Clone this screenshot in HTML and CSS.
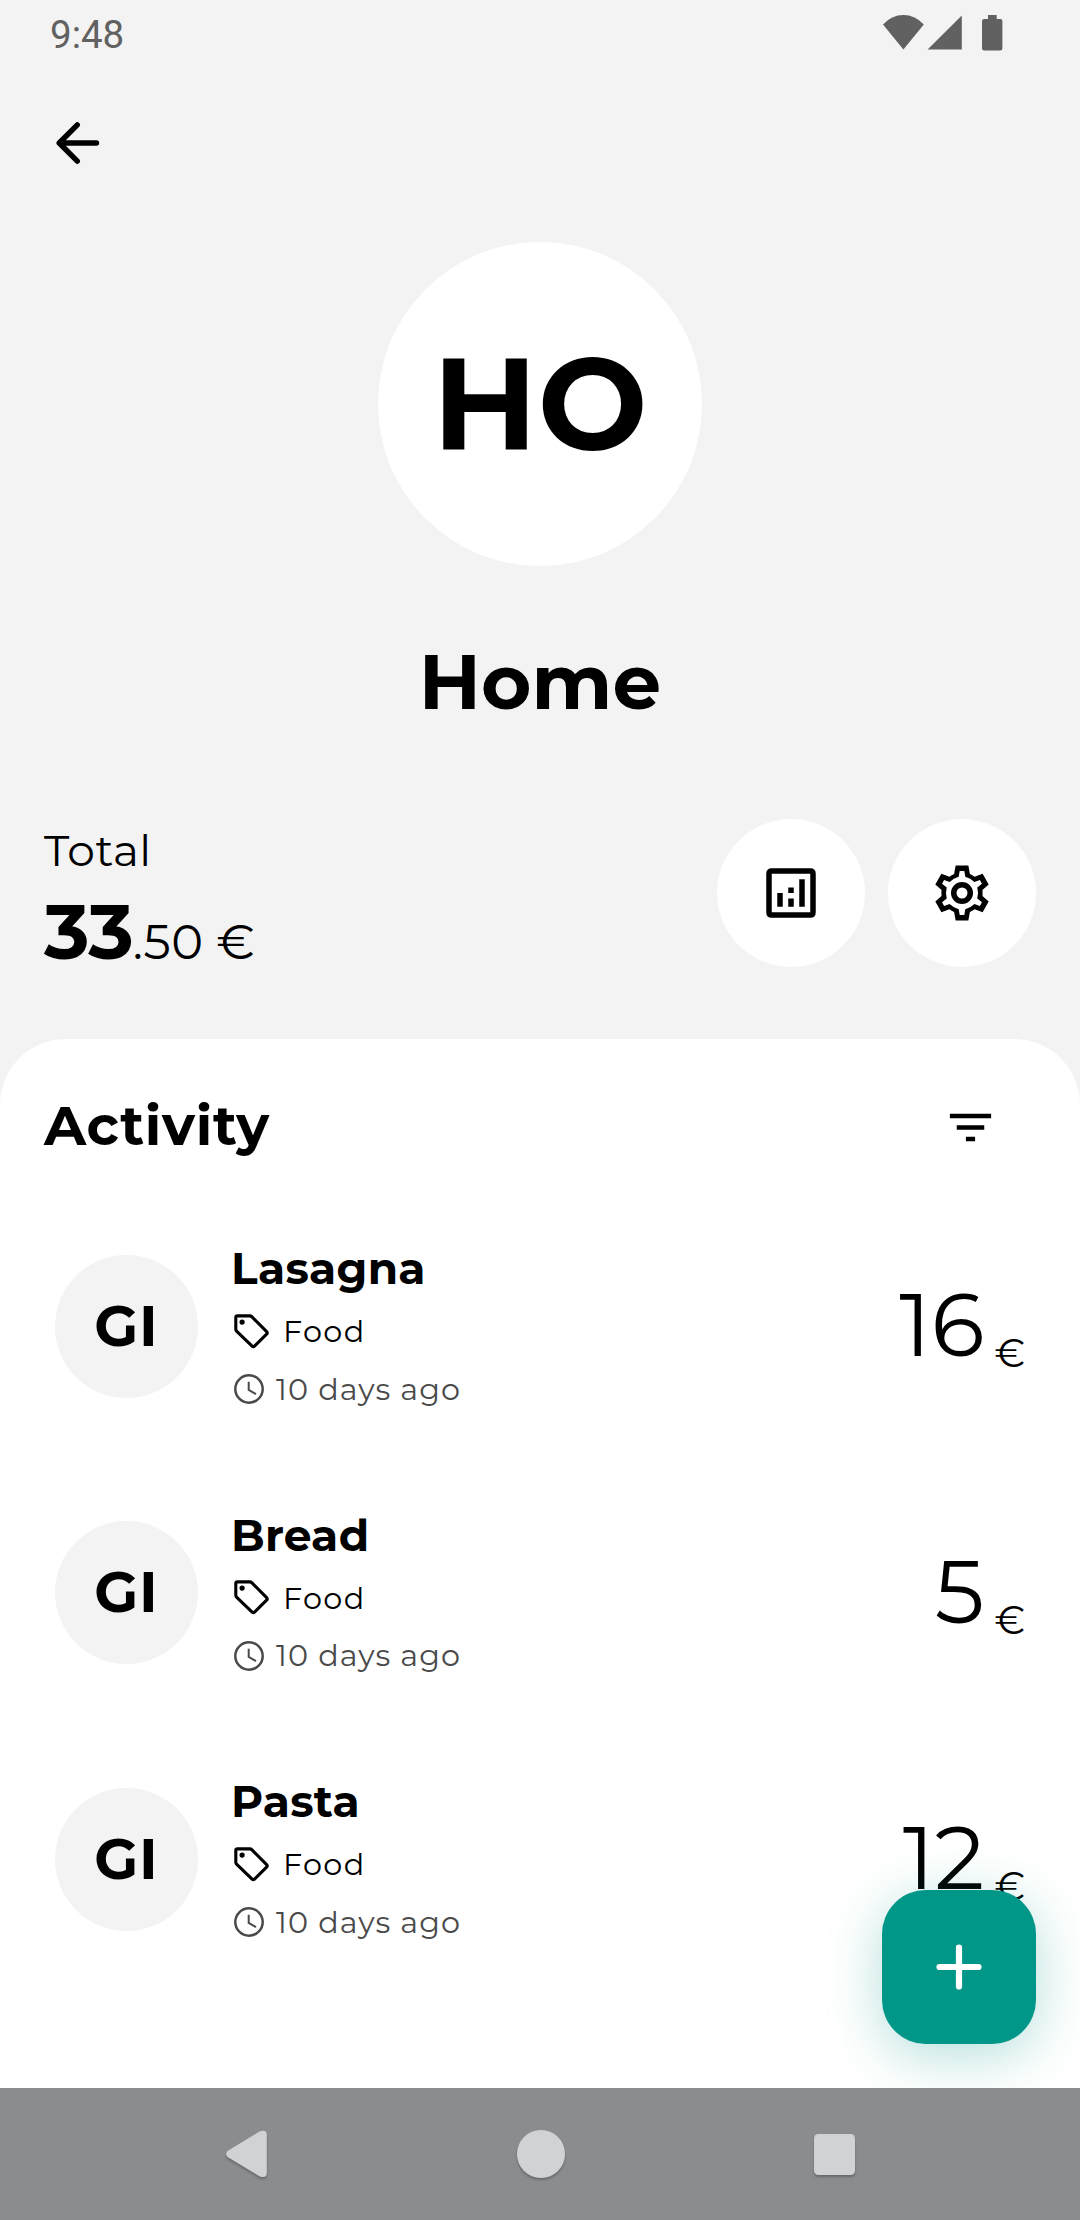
FILE: index.html
```
<!DOCTYPE html>
<html lang="en">
<head>
<meta charset="utf-8">
<title>Home</title>
<link rel="stylesheet" href="styles.css">
</head>
<body>
<svg class="defs" aria-hidden="true">
  <symbol id="tag" viewBox="0 0 36 36">
    <path d="M3.4 1.9H15.6Q17 1.9 18 2.9L32.6 17.6Q33.8 18.9 32.6 20.1L20.5 32.2Q19.3 33.4 18.1 32.2L2.8 17.4Q1.8 16.4 1.8 15.2V3.5Q1.8 1.9 3.4 1.9Z" fill="none" stroke="currentColor" stroke-width="3.1"/>
    <circle cx="8.1" cy="8.1" r="2.6" fill="currentColor"/>
  </symbol>
  <symbol id="clock" viewBox="0 0 30 30">
    <circle cx="15" cy="15" r="13.7" fill="none" stroke="currentColor" stroke-width="2.5"/>
    <path d="M14.7 7.7V15.9L22 20.2" fill="none" stroke="currentColor" stroke-width="2"/>
  </symbol>
</svg>
<div class="screen">
  <header class="status">
    <span class="time">9:48</span>
    <svg class="status-icons" width="124" height="40" viewBox="0 0 124 40">
      <path d="M0 9.5Q8.5 0 20.4 0T40.8 9.5L20.4 34.4Z"/>
      <path d="M44.6 34.6L78.8.4V34.6Z"/>
      <path d="M105 0h8.7v4h3.6q2.1 0 2.1 2V33.6q0 2-2.1 2H101.1q-2.1 0-2.1-2V6q0-2 2.1-2H105Z"/>
    </svg>
  </header>
  <nav class="toolbar">
    <svg width="44" height="44" viewBox="0 0 44 44">
      <path d="M40.500 22H3.500M21.300 3.800L3.200 22L21.300 40.200" fill="none" stroke="#000" stroke-width="5.400" stroke-linecap="round" stroke-linejoin="round"/>
    </svg>
  </nav>
  <div class="badge">HO</div>
  <h1 class="title">Home</h1>
  <section class="summary">
    <div class="totals">
      <div class="label">Total</div>
      <div class="sum"><b>33</b><span>.50 €</span></div>
    </div>
    <div class="actions">
      <button class="round">
        <svg width="66" height="66" viewBox="0 0 24 24">
          <path fill-rule="evenodd" d="M5 3H19Q21 3 21 5V19Q21 21 19 21H5Q3 21 3 19V5Q3 3 5 3ZM5 5V19H19V5Z"/>
          <path d="M7 12h2v5H7zM15 7h2v10h-2zM11 14h2v3h-2zM11 10h2v2h-2z"/>
        </svg>
      </button>
      <button class="round">
        <svg width="66" height="66" viewBox="-12 -12 24 24">
          <path fill-rule="evenodd" d="M-2.310-10H2.310L2.870-6.930Q3.780-6.540 4.570-5.950L7.500-7L9.700-3.100L7.440-1.100Q7.550 0 7.440 1.100L9.700 3.100L7.500 7L4.570 5.950Q3.780 6.540 2.870 6.930L2.310 10H-2.310L-2.870 6.930Q-3.780 6.540-4.570 5.950L-7.500 7L-9.700 3.100L-7.440 1.100Q-7.550 0-7.440-1.100L-9.700-3.100L-7.500-7L-4.570-5.950Q-3.780-6.540-2.870-6.930ZM-.84-8L-1.200-5.880Q-3.100-5.400-4.490-3.980L-6.510-4.730L-7.250-3.370L-5.550-2Q-6.100 0-5.550 2L-7.250 3.370L-6.510 4.730L-4.490 3.980Q-3.100 5.400-1.200 5.880L-.84 8H.84L1.200 5.880Q3.100 5.400 4.490 3.980L6.510 4.730L7.250 3.370L5.550 2Q6.100 0 5.550-2L7.250-3.370L6.510-4.730L4.490-3.980Q3.100-5.400 1.200-5.880L.84-8Z"/>
          <circle r="3" fill="none" stroke="#000" stroke-width="2"/>
        </svg>
      </button>
    </div>
  </section>
  <main class="sheet">
    <div class="sheet-head">
      <h2>Activity</h2>
      <svg class="filter" width="55" height="55" viewBox="0 0 24 24"><path d="M10 18h4v-2h-4zM3 6v2h18V6zM6 13h12v-2H6z"/></svg>
    </div>
    <article class="row">
      <div class="avatar">GI</div>
      <div class="info">
        <div class="name">Lasagna</div>
        <div class="tag"><svg width="36" height="36"><use href="#tag"/></svg>Food</div>
        <div class="when"><svg width="30" height="30"><use href="#clock"/></svg>10 days ago</div>
      </div>
      <div class="amount"><span>16</span><small>€</small></div>
    </article>
    <article class="row">
      <div class="avatar">GI</div>
      <div class="info">
        <div class="name">Bread</div>
        <div class="tag"><svg width="36" height="36"><use href="#tag"/></svg>Food</div>
        <div class="when"><svg width="30" height="30"><use href="#clock"/></svg>10 days ago</div>
      </div>
      <div class="amount"><span>5</span><small>€</small></div>
    </article>
    <article class="row">
      <div class="avatar">GI</div>
      <div class="info">
        <div class="name">Pasta</div>
        <div class="tag"><svg width="36" height="36"><use href="#tag"/></svg>Food</div>
        <div class="when"><svg width="30" height="30"><use href="#clock"/></svg>10 days ago</div>
      </div>
      <div class="amount"><span>12</span><small>€</small></div>
    </article>
    <button class="fab">
      <svg width="46" height="46" viewBox="0 0 46 46"><path d="M23 3.500V42.500M3.500 23H42.500" stroke="#fff" stroke-width="6.200" stroke-linecap="round"/></svg>
    </button>
  </main>
  <footer class="navbar">
    <svg width="42" height="48" viewBox="0 0 42 48"><path d="M1.500 21L33.500 1.500Q40.800-1 40.800 5V42.500Q40.800 49 33.500 46.200L1.500 27Q-1.200 24 1.500 21Z"/></svg>
    <svg width="48" height="48" viewBox="0 0 48 48"><circle cx="24" cy="24" r="24"/></svg>
    <svg width="41" height="41" viewBox="0 0 41 41"><rect width="41" height="41" rx="4.500"/></svg>
  </footer>
</div>
</body>
</html>
```
FILE: styles.css
```
* { box-sizing: border-box; }
body { margin: 0; background: #f3f3f3; color: #000; font-family: Montserrat, Inter, sans-serif; }
h1, h2 { margin: 0; font-weight: 700; }
button { border: 0; padding: 0; display: flex; align-items: center; justify-content: center; }
svg { display: block; flex: none; }
.defs { position: absolute; width: 0; height: 0; }
.screen { width: 1080px; height: 2220px; display: flex; flex-direction: column; overflow: hidden; }

.status { height: 70px; padding: 0 73px 0 50px; display: flex; justify-content: space-between; }
.time { font: 400 38.5px/70px Roboto, sans-serif; color: #616161; }
.status-icons { margin-top: 15px; fill: #616161; }
.toolbar { height: 172px; padding: 51px 56px 0; }

.badge { width: 324px; height: 324px; margin: 0 auto; padding-bottom: 2px; border-radius: 50%; background: #fff; display: flex; align-items: center; justify-content: center; font-size: 130px; font-weight: 700; line-height: 1; }
.title { margin-top: 68px; font-size: 77px; line-height: 94px; text-align: center; }

.summary { height: 220px; margin-top: 91px; padding: 0 44px; display: flex; justify-content: space-between; }
.label { font-size: 44px; font-weight: 400; line-height: 62px; letter-spacing: .5px; }
.sum { display: flex; align-items: baseline; margin-top: 3px; line-height: 94px; }
.sum b { font-size: 77px; font-weight: 700; letter-spacing: -1px; }
.sum span { font-size: 48px; font-weight: 400; letter-spacing: .5px; }
.actions { display: flex; gap: 23px; }
.round { width: 148px; height: 148px; border-radius: 50%; background: #fff; }

.sheet { position: relative; flex: 1; min-height: 0; overflow: hidden; border-radius: 66px 66px 0 0; background: #fff; }
.sheet-head { height: 154px; padding: 19px 82px 0 44px; display: flex; align-items: center; justify-content: space-between; }
.sheet-head h2 { font-size: 55px; line-height: 67px; letter-spacing: .7px; }
.filter { margin-top: 4px; }
.row { height: 266.6px; padding: 0 55px; display: flex; align-items: center; }
.avatar { width: 143px; height: 143px; padding-bottom: 2px; border-radius: 50%; background: #f3f3f3; display: flex; align-items: center; justify-content: center; font-size: 57px; font-weight: 700; line-height: 1; letter-spacing: 1px; }
.info { flex: 1; margin-left: 33px; }
.name { font-size: 44px; font-weight: 700; line-height: 65.4px; letter-spacing: .25px; }
.tag, .when { display: flex; align-items: center; padding-left: 3px; font-size: 30.25px; font-weight: 400; }
.tag { height: 60px; gap: 13px; letter-spacing: 1.375px; }
.when { height: 54.6px; gap: 12px; color: #4a4a4a; letter-spacing: 1.1px; }
.amount { display: flex; align-items: flex-end; gap: 10px; padding-bottom: 2px; font-weight: 400; }
.amount span { font-size: 88px; line-height: 88px; }
.amount small { font-size: 38.5px; line-height: 31px; }

.fab { position: absolute; right: 44px; bottom: 44px; width: 154px; height: 154px; border-radius: 44px; background: #009688; box-shadow: 0 11px 55px rgba(0, 150, 136, .3); }
.navbar { height: 132px; padding: 0 225px 0 226px; background: #8a8d8f; display: flex; align-items: center; justify-content: space-between; }
.navbar svg { fill: #d1d2d4; overflow: visible; filter: drop-shadow(0 2px 1px rgba(0, 0, 0, .25)); }
```
